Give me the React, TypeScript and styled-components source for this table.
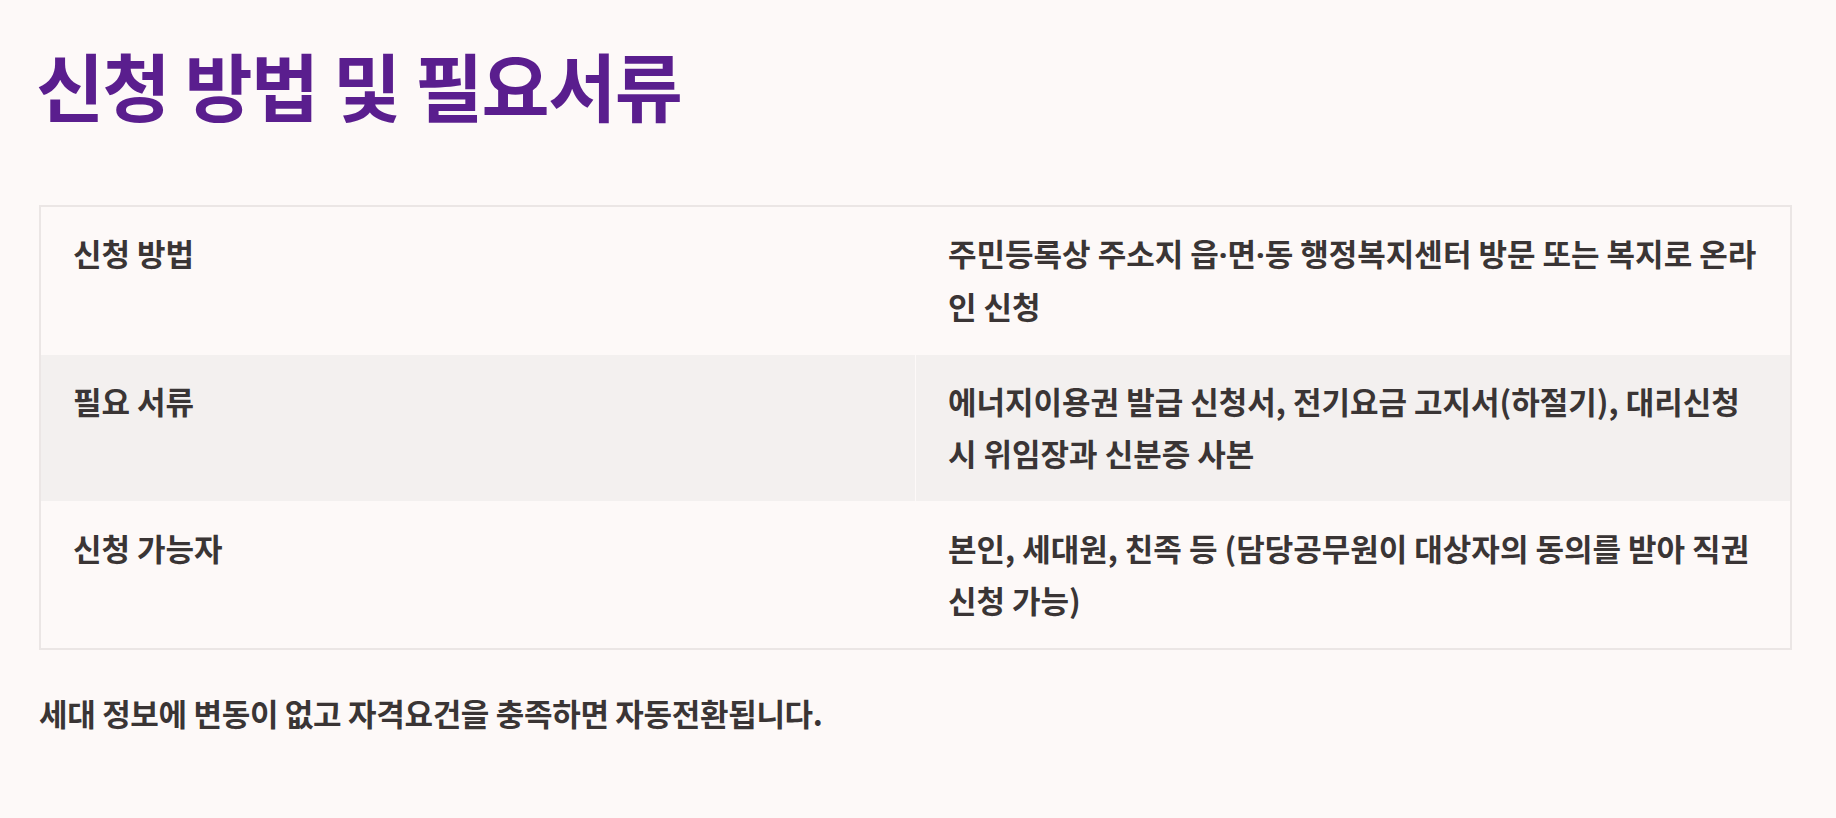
import React from 'react'
import styled, { createGlobalStyle } from 'styled-components'

const GlobalStyle = createGlobalStyle`
  html, body {
    margin: 0;
    padding: 0;
    background: #fdf9f8;
  }
  body {
    font-family: "Noto Sans CJK KR", "Noto Sans", sans-serif;
    color: #3a3535;
  }
`

interface InfoRow {
  label: string
  value: string
}

const rows: InfoRow[] = [
  {
    label: '신청 방법',
    value: '주민등록상 주소지 읍·면·동 행정복지센터 방문 또는 복지로 온라인 신청',
  },
  {
    label: '필요 서류',
    value: '에너지이용권 발급 신청서, 전기요금 고지서(하절기), 대리신청 시 위임장과 신분증 사본',
  },
  {
    label: '신청 가능자',
    value: '본인, 세대원, 친족 등 (담당공무원이 대상자의 동의를 받아 직권 신청 가능)',
  },
]

const Page = styled.main`
  padding: 40px 44px 60px 39px;
`

const Title = styled.h2`
  margin: 0 0 76px -3px;
  font-size: 74px;
  line-height: 1.2;
  font-weight: 700;
  letter-spacing: -0.02em;
  color: #5a1e8e;
`

const Table = styled.table`
  width: 100%;
  border-collapse: collapse;
  table-layout: fixed;
  border: 2px solid #ebe6e5;
`

const Row = styled.tr<{ shaded?: boolean }>`
  background: ${(p) => (p.shaded ? '#f3f0ef' : '#fdf9f8')};
`

const Cell = styled.td`
  width: 50%;
  padding: 20px 26px 22px 32px;
  vertical-align: top;
  border: 1px solid #fdf9f8;
  font-size: 31px;
  line-height: 52px;
  font-weight: 700;
  letter-spacing: 0;
  color: #3a3535;
`

/* narrow middle dot, as in 읍·면·동 */
const Dot = styled.span`
  font-family: "Noto Sans", "Liberation Sans", sans-serif;
`

const Note = styled.p`
  margin: 37px 0 0;
  font-size: 31px;
  line-height: 52px;
  font-weight: 700;
  letter-spacing: -0.01em;
  color: #3a3535;
`

// splits a value on the middle dot so the dot can use the narrower glyph
const withDots = (text: string) =>
  text.split('·').map((part, i) => (
    <React.Fragment key={i}>
      {i > 0 && <Dot>·</Dot>}
      {part}
    </React.Fragment>
  ))

export default function App() {
  return (
    <>
      <GlobalStyle />
      <Page>
        <Title>신청 방법 및 필요서류</Title>
        <Table>
          <tbody>
            {rows.map((row, i) => (
              <Row key={row.label} shaded={i % 2 === 1}>
                <Cell>{row.label}</Cell>
                <Cell>{withDots(row.value)}</Cell>
              </Row>
            ))}
          </tbody>
        </Table>
        <Note>세대 정보에 변동이 없고 자격요건을 충족하면 자동전환됩니다.</Note>
      </Page>
    </>
  )
}
